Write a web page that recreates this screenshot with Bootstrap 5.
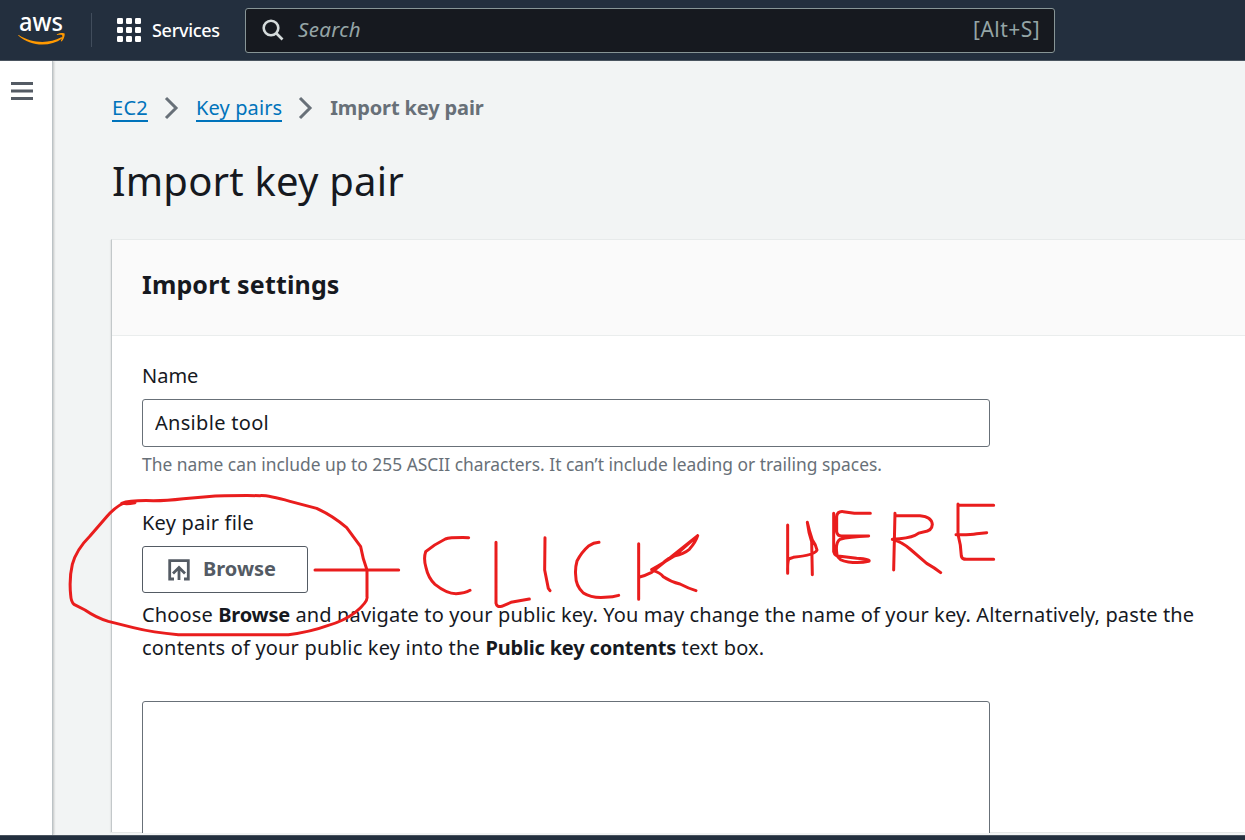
<!DOCTYPE html>
<html lang="en">
<head>
<meta charset="utf-8">
<meta name="viewport" content="width=device-width, initial-scale=1">
<title>Import key pair</title>
<link href="https://cdn.jsdelivr.net/npm/bootstrap@5.3.0/dist/css/bootstrap.min.css" rel="stylesheet">
<style>
body{font-family:"Noto Sans","Open Sans",sans-serif;font-size:20px;line-height:33px;color:#16191f;background:#f2f4f4;height:840px}
.topbar{height:61px;background:#232f3e;border-bottom:1px solid #4a545f;padding:0 0 0 18px}
.logo{width:49px;height:34px;margin-top:-1px;overflow:visible}
.logo text{font:500 24.500px "Noto Sans",sans-serif;fill:#fff}
.rule{width:1px;height:34px;background:#414d5c;margin-left:24px}
.services{margin-left:25px;color:#fff;font-size:18px;font-weight:500;gap:11px;width:103px;white-space:nowrap}
.t-serv{letter-spacing:-.3px}
.search{width:810px;height:45px;margin-left:25px;background:#16191f;border:1px solid #879596;border-radius:3px;color:#95a5a6;padding:0 14px 0 16px}
.t-search{font-size:20.5px;letter-spacing:.3px;margin:-2px 0 0 14px}
.t-alt{font-size:21px;letter-spacing:.45px;margin-top:-1px}
.side{width:53px;background:#fff;border-right:1px solid #bcc3c6;box-shadow:1px 0 2px #0003;padding:20px 0 0 11px;z-index:1}
.page{padding:28px 0 0 58px;height:772px}
.crumbs{line-height:24px;height:38px;padding-left:1px}
.crumbs a{color:#0073bb;text-decoration:none;border-bottom:2px solid #0073bb;line-height:25px}
.crumbs b{color:#687078;font-weight:700;letter-spacing:-.13px}
.crumbs svg{margin:0 16px}
.t-ec2{letter-spacing:.3px}
.t-kp{letter-spacing:.1px}
.title{font-size:40px;line-height:50px;margin:29px 0 33px 1px;font-weight:400;letter-spacing:.2px}
.panel{background:#fff;border-left:1px solid #c3c8ca;border-top:1px solid #e7eaea;box-shadow:-1px 1px 1px #0000000d;height:593px}
.panel-top{height:96px;background:#fafafa;border-bottom:1px solid #eaeded;padding:27px 0 0 30px}
.panel-top h2{font-size:25px;line-height:34px;font-weight:700;margin:0;letter-spacing:.15px}
.panel-in{padding:23px 0 0 30px}
.field{width:848px;height:48px;border:1px solid #687078;border-radius:3px;padding:0 12px 2px;color:#16191f;background:#fff;font-size:20px;letter-spacing:.3px;margin-top:7px}
.hint{color:#687078;font-size:17.400px;line-height:24px;margin-top:5px}
.t-file{margin-top:30px;letter-spacing:.2px}
.browse{width:166px;height:47px;border:1px solid #545b64;border-radius:3px;background:#fff;color:#545b64;font-weight:700;font-size:20px;padding:0 6px 0 0;gap:13px;margin-top:7px}
.browse span{margin-top:-2px}
.note{margin-top:5px}
.note b{letter-spacing:-.18px}
.t-l1{letter-spacing:.13px}
.t-l2{letter-spacing:.19px}
.keybox{width:848px;height:160px;border:1px solid #687078;border-radius:3px;margin-top:37px;background:#fff;resize:none;display:block}
.footbar{height:5px;background:#232f3e;border-top:1px solid #4a545f}
.ink{left:0;top:0;pointer-events:none;z-index:5}
</style>
<script src="https://cdn.jsdelivr.net/npm/bootstrap@5.3.0/dist/js/bootstrap.bundle.min.js"></script>
</head>
<body class="d-flex flex-column overflow-hidden position-relative">
<header class="topbar d-flex align-items-center flex-shrink-0">
  <svg class="logo" viewBox="0 0 49 34"><text x="1" y="17.500" textLength="44" lengthAdjust="spacingAndGlyphs">aws</text>
    <path d="M.8 22c13 8.500 30 9 42.500 2.300 1.300-.6 1.800.5.8 1.300C32 34.500 12 33.500.5 22.800c-.5-.6-.2-1 .3-.8Z" fill="#f90"/><path d="M39 21.200c3-1.700 6.900-1.500 7.500-.8s-.1 5.600-2.900 7.900c-.6.4-1 .1-.7-.5.900-2.200 1.800-4.700 1.300-5.400s-3.200-.6-4.800-.4c-.6.1-.8-.4-.4-.8Z" fill="#f90"/></svg>
  <div class="rule"></div>
  <div class="services d-flex align-items-center">
    <svg class="flex-shrink-0" width="24" height="24" fill="#fff"><rect width="6" height="6" rx="1.200"/><rect x="9" width="6" height="6" rx="1.200"/><rect x="18" width="6" height="6" rx="1.200"/><rect y="9" width="6" height="6" rx="1.200"/><rect x="9" y="9" width="6" height="6" rx="1.200"/><rect x="18" y="9" width="6" height="6" rx="1.200"/><rect y="18" width="6" height="6" rx="1.200"/><rect x="9" y="18" width="6" height="6" rx="1.200"/><rect x="18" y="18" width="6" height="6" rx="1.200"/></svg>
    <span class="t-serv">Services</span>
  </div>
  <div class="search d-flex align-items-center">
    <svg width="22" height="22" fill="none" stroke="#d5dbdb" stroke-width="2.600"><circle cx="9" cy="9" r="7.300"/><path d="m14 14 6.500 6.500"/></svg>
    <em class="t-search">Search</em><span class="t-alt ms-auto">[Alt+S]</span>
  </div>
</header>
<div class="d-flex flex-grow-1 overflow-hidden">
  <nav class="side flex-shrink-0"><svg class="d-block" width="22" height="20" stroke="#545b64" stroke-width="3"><path d="M0 2.500h22M0 10h22M0 17.500h22"/></svg></nav>
  <main class="page flex-grow-1 overflow-hidden">
    <div class="crumbs d-flex align-items-center">
      <a href="#" class="t-ec2">EC2</a>
      <svg width="16" height="24" fill="none" stroke="#687078" stroke-width="3"><path d="m2 2 10 10L2 22"/></svg>
      <a href="#" class="t-kp">Key pairs</a>
      <svg width="16" height="24" fill="none" stroke="#687078" stroke-width="3"><path d="m2 2 10 10L2 22"/></svg>
      <b>Import key pair</b>
    </div>
    <h1 class="title">Import key pair</h1>
    <section class="panel">
      <div class="panel-top"><h2>Import settings</h2></div>
      <div class="panel-in">
        <label class="d-block" for="kname">Name</label>
        <input id="kname" class="field d-block" value="Ansible tool">
        <div class="hint">The name can include up to 255 ASCII characters. It can’t include leading or trailing spaces.</div>
        <div class="t-file">Key pair file</div>
        <button type="button" class="browse d-flex align-items-center justify-content-center">
          <svg width="22" height="22" fill="none" stroke="#545b64" stroke-width="2.800"><path d="M6 20H1.700V1.700h18.600V20H16M11 21V8.500M5 14.500l6-6 6 6"/></svg><span>Browse</span></button>
        <div class="note text-nowrap"><div class="t-l1">Choose <b>Browse</b> and navigate to your public key. You may change the name of your key. Alternatively, paste the</div><div class="t-l2">contents of your public key into the <b>Public key contents</b> text box.</div></div>
        <textarea class="keybox" aria-label="Public key contents"></textarea>
      </div>
    </section>
  </main>
</div>
<div class="footbar flex-shrink-0"></div>
<svg class="ink position-absolute" width="1245" height="840" fill="none" stroke="#e91d1d" stroke-width="9" stroke-linecap="round" stroke-linejoin="round">
  <g transform="translate(60 480) scale(.33333)"><path d="M225 68Q200 73 190 70C175 75 150 98 140 110L90 168C65 193 46 220 37 253Q27 295 32 345Q33 365 42 373L75 390Q110 414 145 424L220 443Q280 458 355 464H685Q750 456 805 436Q850 424 885 398Q925 365 921 350V270Q908 235 902 200L860 143Q820 108 770 85L690 64Q620 45 600 47Q500 46 440 50L370 56Q320 62 280 62Q210 60 185 70M765 270H1016"/></g>
  <g transform="translate(400 490) scale(.33333)"><path d="M206 143Q150 142 136 147Q105 162 77 185Q70 205 78 233Q85 265 105 283Q140 311 168 311Q195 310 210 301M288 157V340Q290 352 305 349L333 337L388 327M435 143L434 240L445 295L450 302M597 157Q580 158 567 167Q545 186 531 213Q525 235 527 255C527 280 540 300 550 309Q575 325 615 322Q640 321 656 316M716 161V328M719 261Q735 257 755 247L893 137Q888 155 868 178Q850 193 825 197Q805 203 788 220L755 239M755 239L822 199L893 137M760 242Q780 248 790 260Q812 275 840 282Q865 295 888 302"/></g>
  <g transform="translate(760 490) scale(.33333)"><path d="M83 105V250Q82 220 86 207L100 202Q165 195 171 180Q168 165 157 150Q147 120 142 97Q146 130 155 155L157 254M221 70V185Q225 200 240 199L290 205Q335 208 326 214Q300 220 265 216Q235 212 231 195Q225 158 240 148Q265 140 326 138H245Q232 138 230 125V80Q232 63 250 65L283 70H331M405 70L401 240M405 77H480Q515 80 517 103Q516 123 490 126Q475 128 465 136Q445 145 397 148Q425 155 450 177L500 220Q525 234 542 248M594 42V133Q603 165 604 198Q605 208 620 208H701M594 46H701M588 134Q630 135 650 131L680 128"/></g>
</svg>
</body>
</html>
